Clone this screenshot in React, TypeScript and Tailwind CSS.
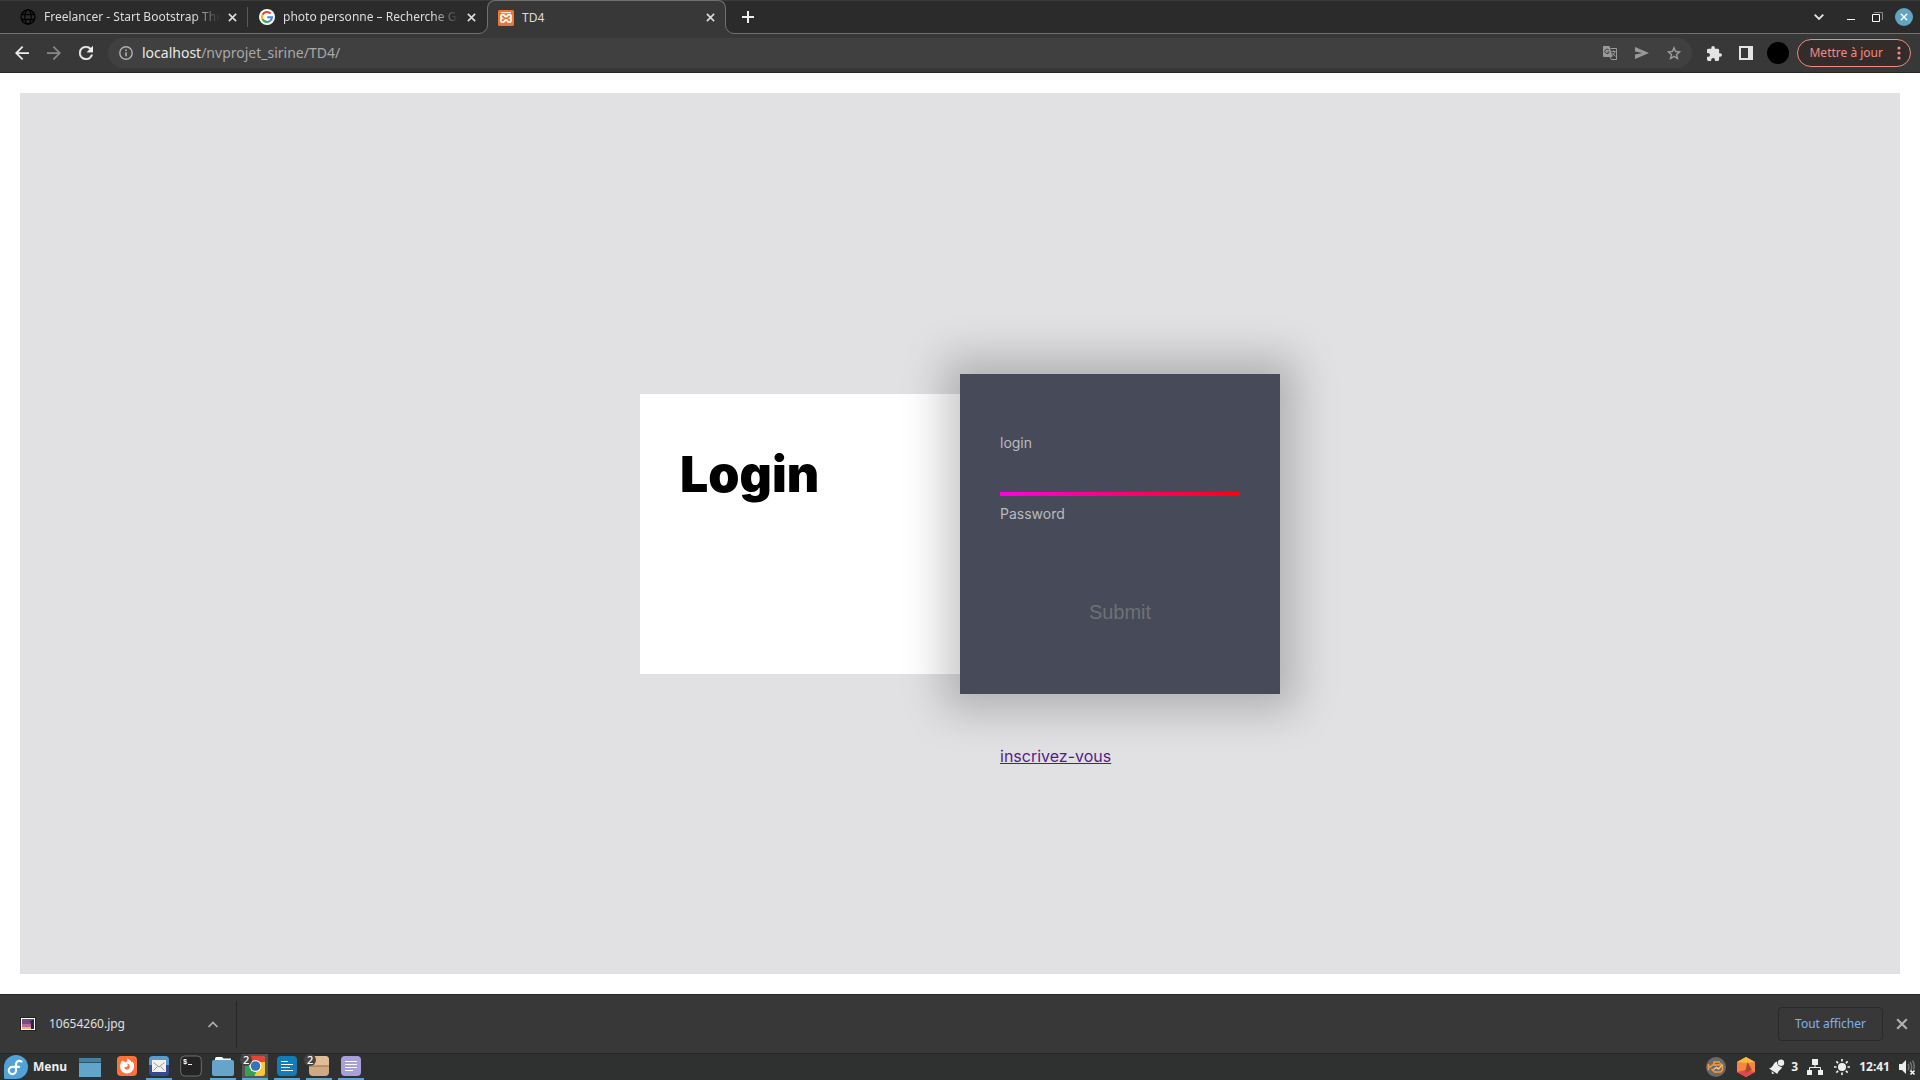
import React from "react";

const NOTO = "font-['Noto_Sans',sans-serif]";

function GlobeIcon() {
  return (
    <svg viewBox="0 0 16 16" className="size-4 shrink-0" fill="none" stroke="#000" strokeWidth="1.3">
      <circle cx="8" cy="8" r="7" />
      <ellipse cx="8" cy="8" rx="3.2" ry="7" />
      <path d="M1.5 5.5h13M1.5 10.5h13" />
    </svg>
  );
}

function GoogleIcon() {
  return (
    <svg viewBox="0 0 16 16" className="size-4 shrink-0">
      <circle cx="8" cy="8" r="8" fill="#fff" />
      <g fill="none" strokeWidth="2.1">
        <path d="M11.6 4.5A5 5 0 0 0 3.6 5.7" stroke="#ea4335" />
        <path d="M3.6 5.6a5 5 0 0 0 0 4.8" stroke="#fbbc05" />
        <path d="M3.6 10.3a5 5 0 0 0 7.6 1.5" stroke="#34a853" />
        <path d="M11.2 11.8A5 5 0 0 0 13 8.2H8.2" stroke="#4285f4" />
      </g>
    </svg>
  );
}

function XamppIcon() {
  return (
    <svg viewBox="0 0 16 16" className="size-4 shrink-0">
      <rect width="16" height="16" rx="1.5" fill="#f37430" />
      <path d="M3 2.700h10" stroke="#fff" strokeWidth="1" />
      <path
        d="M5 4.600c-2.800 0-2.600 2.800-1 3.600-1.800.8-1.800 4 .8 4 2.200 0 1.400-2.200 3.200-2.200s1 2.200 3.200 2.200c2.600 0 2.600-3.200.8-4 1.600-.8 1.800-3.600-1-3.600-2 0-1.400 2-3 2s-1-2-3-2z"
        fill="none"
        stroke="#fff"
        strokeWidth="1.800"
      />
    </svg>
  );
}

function Cross({ className = "" }: { className?: string }) {
  return (
    <svg viewBox="0 0 10 10" className={className} fill="none" stroke="currentColor" strokeWidth="1.8">
      <path d="M1 1l8 8M9 1l-8 8" />
    </svg>
  );
}

function TabStrip() {
  return (
    <div className="flex h-[34px] border-t border-[#3a3a3a] bg-[#2b2b2b] text-[12px] text-[#dcdcdc]">
      <div className="flex w-[247px] items-center border-b border-[#707070] pr-[7px] pl-5">
        <GlobeIcon />
        <span className="ml-2 min-w-0 flex-1 overflow-hidden whitespace-nowrap [mask-image:linear-gradient(to_right,#000_85%,transparent)]">
          Freelancer - Start Bootstrap Theme
        </span>
        <button aria-label="Fermer l'onglet" className="ml-1 flex size-4 items-center justify-center">
          <Cross className="size-[9px]" />
        </button>
      </div>
      <div className="flex w-[240px] items-center border-b border-[#707070] pr-2">
        <span className="h-5 w-px bg-[#5a5a5a]" />
        <span className="ml-[11px]"><GoogleIcon /></span>
        <span className="ml-2 min-w-0 flex-1 overflow-hidden whitespace-nowrap [mask-image:linear-gradient(to_right,#000_85%,transparent)]">
          photo personne – Recherche Google
        </span>
        <button aria-label="Fermer l'onglet" className="ml-1 flex size-4 items-center justify-center">
          <Cross className="size-[9px]" />
        </button>
      </div>
      <div className="relative -mt-px flex w-[239px] items-center rounded-t-lg border border-b-0 border-[#707070] bg-[#383838] pr-[7px] pl-[10px]">
        <svg viewBox="0 0 9 9" className="absolute bottom-0 left-[-9px] size-[9px]">
          <path d="M0 9V8.500A8.500 8.500 0 0 0 8.500 0H9v9z" fill="#383838" />
          <path d="M0 8.500A8.500 8.500 0 0 0 8.500 0" fill="none" stroke="#707070" />
        </svg>
        <svg viewBox="0 0 9 9" className="absolute right-[-9px] bottom-0 size-[9px]">
          <path d="M9 9V8.500A8.500 8.500 0 0 1 .5 0H0v9z" fill="#383838" />
          <path d="M9 8.500A8.500 8.500 0 0 1 .5 0" fill="none" stroke="#707070" />
        </svg>
        <XamppIcon />
        <span className="ml-2 flex-1">TD4</span>
        <button aria-label="Fermer l'onglet" className="flex size-4 items-center justify-center">
          <Cross className="size-[9px]" />
        </button>
      </div>
      <div className="flex flex-1 items-center border-b border-[#707070] pr-[7px] pl-[14px]">
        <button aria-label="Nouvel onglet" className="flex size-4 items-center justify-center">
          <svg viewBox="0 0 12 12" className="size-3" stroke="#eee" strokeWidth="2">
            <path d="M6 0v12M0 6h12" />
          </svg>
        </button>
        <span className="flex-1" />
        <button aria-label="Rechercher des onglets" className="mr-[23px]">
          <svg viewBox="0 0 10 6" className="h-[6px] w-[10px]" fill="none" stroke="#e4e4e4" strokeWidth="1.8">
            <path d="M.7.7L5 5 9.300.7" />
          </svg>
        </button>
        <button aria-label="Réduire" className="mr-[17px] pt-[5px]">
          <svg viewBox="0 0 8 1" className="h-px w-2"><path d="M0 .5h8" stroke="#fff" /></svg>
        </button>
        <button aria-label="Restaurer" className="mr-3">
          <svg viewBox="0 0 11 10" className="h-[10px] w-[11px]" fill="none">
            <path d="M2 .5h8.500V8" stroke="#888" />
            <path d="M.5 2.500h7v7h-7z" stroke="#fff" />
          </svg>
        </button>
        <button aria-label="Fermer" className="flex size-[18px] items-center justify-center rounded-full bg-[#60a5c3] text-white">
          <Cross className="size-2" />
        </button>
      </div>
    </div>
  );
}

function Toolbar() {
  return (
    <div className="flex h-[39px] items-center border-b border-[#262626] bg-[#383838] pr-[9px] pl-[15px]">
      <div className="flex items-center gap-[18px]">
        <button aria-label="Retour">
          <svg viewBox="4 4 16 16" className="size-[14px]" fill="#eee"><path d="M20 11H7.830l5.590-5.590L12 4l-8 8 8 8 1.410-1.410L7.830 13H20v-2z" /></svg>
        </button>
        <button aria-label="Avancer">
          <svg viewBox="4 4 16 16" className="size-[14px]" fill="#888"><path d="M12 4l-1.410 1.410L16.170 11H4v2h12.170l-5.580 5.590L12 20l8-8z" /></svg>
        </button>
        <button aria-label="Actualiser">
          <svg viewBox="4 4 16 16" className="size-[14px]" fill="#eee" stroke="#eee" strokeWidth=".4"><path d="M17.650 6.350A7.960 7.960 0 0 0 12 4a8 8 0 1 0 7.730 10h-2.080A6 6 0 1 1 12 6c1.660 0 3.140.69 4.220 1.780L13 11h7V4l-2.350 2.350z" /></svg>
        </button>
      </div>
      <div className="ml-[15px] flex h-[30px] flex-1 items-center rounded-full bg-[#404040] px-[11px]">
        <svg viewBox="0 0 14 14" className="size-[14px]" fill="none" stroke="#b0b0b0" strokeWidth="1.4">
          <circle cx="7" cy="7" r="6.200" />
          <path d="M7 6.200v4M7 3.600V5" strokeWidth="1.600" />
        </svg>
        <div className="ml-[9px] flex-1 text-[14px] leading-5 text-[#a9a9a9]">
          <span className="text-[#e8e8e8]">localhost</span>/nvprojet_sirine/TD4/
        </div>
        <div className="flex items-center gap-[18px]">
          <button aria-label="Traduire">
            <svg viewBox="0 0 14 14" className="size-[14px]" fill="none">
              <path d="M0 0h6.500l3 11H1a1 1 0 0 1-1-1z" fill="#9a9a9a" />
              <path d="M7.500 2.500H13.500v11H8.500l-1.500-2.500" stroke="#9a9a9a" />
              <path d="M5.800 4A2.200 2.200 0 1 0 6.200 6H4.300" stroke="#404040" />
              <path d="M8.500 5.500h4M10.500 4.500v1M12 5.500c-.5 2-1.500 3-3 4M9.500 7l3 3.500" stroke="#9a9a9a" />
            </svg>
          </button>
          <button aria-label="Partager">
            <svg viewBox="0 0 14 12" className="h-3 w-[14px]" fill="#9a9a9a"><path d="M0 0l14 6L0 12V7.500L7.500 6 0 4.500z" /></svg>
          </button>
          <button aria-label="Ajouter aux favoris">
            <svg viewBox="2 2 20 19" className="h-[14px] w-[14px]" fill="#a4a4a4" stroke="#a4a4a4" strokeWidth=".3"><path d="M22 9.240l-7.190-.62L12 2 9.190 8.630 2 9.240l5.460 4.730L5.820 21 12 17.270 18.180 21l-1.630-7.030L22 9.240zM12 15.400l-3.760 2.270 1-4.280-3.320-2.880 4.380-.38L12 6.100l1.710 4.040 4.380.38-3.320 2.880 1 4.280L12 15.400z" /></svg>
          </button>
        </div>
      </div>
      <button aria-label="Extensions" className="ml-[15px]">
        <svg viewBox="2 1 21 21" className="size-[15px]" fill="#e4e4e4"><path d="M20.500 11H19V7a2 2 0 0 0-2-2h-4V3.500a2.500 2.500 0 0 0-5 0V5H4a2 2 0 0 0-2 2v3.800h1.500a2.700 2.700 0 0 1 0 5.400H2V20a2 2 0 0 0 2 2h3.800v-1.500a2.700 2.700 0 0 1 5.400 0V22H17a2 2 0 0 0 2-2v-4h1.500a2.500 2.500 0 0 0 0-5z" /></svg>
      </button>
      <button aria-label="Panneau latéral" className="ml-[17px]">
        <svg viewBox="0 0 14 14" className="size-[14px]"><path d="M0 0h14v14H0zM2 2v10h7V2z" fill="#e4e4e4" fillRule="evenodd" /></svg>
      </button>
      <button aria-label="Profil" className="ml-[14px] size-[22px] rounded-full bg-black" />
      <button className="ml-2 flex h-7 items-center rounded-full border border-[#f28b82] bg-[#342b2b] pr-[9px] pl-[11px] text-[12px] text-[#f28b82]">
        Mettre à jour
        <svg viewBox="0 0 4 14" className="ml-[14px] h-[14px] w-1" fill="#f28b82">
          <circle cx="2" cy="2" r="1.600" /><circle cx="2" cy="7" r="1.600" /><circle cx="2" cy="12" r="1.600" />
        </svg>
      </button>
    </div>
  );
}

function LoginPage() {
  return (
    <main className="flex flex-1 bg-white p-5 font-['Inter',sans-serif]">
      <div className="grid flex-1 grid-rows-[1fr_auto_1fr] justify-center bg-[#e1e1e3]">
        <div className="row-start-2 flex items-center">
          <div className="h-[280px] w-80 bg-white p-10">
            <h1 className="mt-2.5 text-[50px] leading-[60px] font-black text-black">Login</h1>
          </div>
          <form className="flex h-80 w-80 flex-col bg-[#474a59] px-10 pt-[60px] text-[14px] leading-[18px] text-[#bbb] shadow-[0_0_40px_16px_rgba(0,0,0,0.22)]" onSubmit={(e) => e.preventDefault()}>
            <label htmlFor="login">login</label>
            <input id="login" type="text" className="h-10 w-full bg-transparent text-[20px] text-[#f2f2f2] outline-none" />
            <div className="h-1 w-full bg-[linear-gradient(to_right,#ff00e0,#ff0010)]" />
            <label htmlFor="password" className="mt-[9px]">Password</label>
            <input id="password" type="password" className="h-10 w-full bg-transparent text-[20px] text-[#f2f2f2] outline-none" />
            <button type="submit" className="mt-[34px] h-[30px] w-full font-['Liberation_Sans',sans-serif] text-[20px] text-[#707075]">
              Submit
            </button>
          </form>
        </div>
        <div className="row-start-3 pt-[50px] pl-[360px]">
          <a href="#inscription" className="text-[16px] leading-6 text-[#551a8b] underline">inscrivez-vous</a>
        </div>
      </div>
    </main>
  );
}

function DownloadBar() {
  return (
    <div className="flex h-[60px] items-center border-t border-b border-[#262626] bg-[#383838] pr-3 pl-5 text-[12px] text-[#e0e0e0]">
      <svg viewBox="0 0 16 14" className="h-[14px] w-4">
        <rect x=".5" y=".5" width="15" height="13" fill="#fff" stroke="#222" />
        <path d="M2 2h12v10H2z" fill="#7a4a86" />
        <path d="M2 7h12v3H2z" fill="#b86a96" />
        <path d="M2 10h12v2H2z" fill="#eeb07c" />
        <path d="M9 3l2 1 3-2v10h-3V6z" fill="#32214a" />
      </svg>
      <span className="ml-[13px] w-[158px]">10654260.jpg</span>
      <button aria-label="Options du téléchargement">
        <svg viewBox="0 0 12 7" className="h-[7px] w-3" fill="none" stroke="#b0b0b0" strokeWidth="1.700"><path d="M1.500 6L6 1.500 10.500 6" /></svg>
      </button>
      <span className="ml-[17px] h-[47px] w-px bg-[#262626]" />
      <span className="flex-1" />
      <button className="h-[34px] rounded border border-[#292929] px-4 text-[12px] text-[#7cb2f4]">Tout afficher</button>
      <button aria-label="Fermer la barre" className="ml-[13px] text-[#b0b0b0]"><Cross className="size-3" /></button>
    </div>
  );
}

function TaskItem({ label, open, active, badge, children }: { label: string; open?: boolean; active?: boolean; badge?: string; children: React.ReactNode }) {
  return (
    <button
      aria-label={label}
      className={"relative flex h-[26px] w-[26px] justify-center border-b-2 pt-px " + (open ? "border-[#62a5cb] " : "border-transparent ") + (active ? "bg-[#555]" : "")}
    >
      <svg viewBox="0 0 22 22" className="size-[22px] shrink-0">{children}</svg>
      {badge && <span className="absolute top-0 -left-0.5 flex size-3 items-center justify-center rounded-full bg-[#444] text-[11px] leading-3 font-medium text-white">{badge}</span>}
    </button>
  );
}

function Taskbar() {
  return (
    <footer className="flex h-[26px] items-center bg-[#2f3130] text-[12px] font-bold text-[#eee]">
      <button className="ml-1 flex items-center gap-[5px]">
        <svg viewBox="0 0 24 24" className="size-6">
          <path d="M12 0a12 12 0 1 1 0 24H1.500A1.500 1.500 0 0 1 0 22.500V12A12 12 0 0 1 12 0z" fill="#51a2da" />
          <path d="M17.500 6.500c-3-1.500-5.500 0-5.500 3V15.500a3.600 3.600 0 1 1-3.600-3.600H15" fill="none" stroke="#fff" strokeWidth="2.200" strokeLinecap="round" />
        </svg>
        Menu
      </button>
      <button aria-label="Afficher le bureau" className="ml-3">
        <svg viewBox="0 0 22 19" className="h-[19px] w-[22px]"><path d="M0 0h22v19H0z" fill="#62a5cb" /><path d="M0 0h22v4H0z" fill="#487f9e" /><path d="M0 4.500h22" stroke="#24586f" /></svg>
      </button>
      <div className="ml-[13px] flex gap-[6px]">
        <TaskItem label="Firefox">
          <rect x="1" y="1" width="20" height="20" rx="4" fill="#ff7139" />
          <path d="M10 7.500c1-.7 1.300-2 1-4 3.500 1 4.300 3 4.500 4l1-1c1.500 2 1.500 3.500 1.500 5a7 7 0 1 1-14 0C4 9 5 7 6 5.500z" fill="#fff" />
          <path d="M11 8.500a3 3 0 1 1-3 4l2.500-.5L12 10.500z" fill="#ff7139" />
        </TaskItem>
        <TaskItem label="Courrier" open>
          <rect x="1" y="1" width="20" height="20" rx="4" fill="#354b91" />
          <path d="M1 10h20V5a4 4 0 0 0-4-4H5a4 4 0 0 0-4 4z" fill="#5a9bd0" />
          <path d="M4 5h14v12H4z" fill="#f4f1ec" />
          <path d="M5.500 7.500L11 12l5.500-4.500M5.500 15.500l4-4M16.500 15.500l-4-4" fill="none" stroke="#999" />
        </TaskItem>
        <TaskItem label="Terminal">
          <rect x=".7" y="1" width="20.600" height="20" rx="4" fill="#242424" stroke="#747474" strokeWidth=".9" />
          <text x="3" y="9" fill="#fff" fontSize="7" fontFamily="Liberation Mono, monospace">$</text>
          <path d="M8 9.500h4" stroke="#fff" />
        </TaskItem>
        <TaskItem label="Fichiers" open>
          <path d="M3 3.500L4 2h6l1.500 1.500H19V8H3z" fill="#fff" />
          <rect y="5" width="22" height="16" rx="2" fill="#66a5c9" />
        </TaskItem>
        <TaskItem label="Chrome" open active badge="2">
          <clipPath id="chrome"><rect x="1" y="1" width="20" height="20" rx="3" /></clipPath>
          <g clipPath="url(#chrome)">
            <path d="M0 0h22v22H0z" fill="#fcc934" />
            <path d="M0 0h22v7H0z" fill="#e64335" />
            <path d="M0 4l8 10 5 1-3 7H0z" fill="#34a34f" />
          </g>
          <circle cx="11.500" cy="11" r="6" fill="#fff" /><circle cx="11.500" cy="11" r="4.800" fill="#3674b8" />
        </TaskItem>
        <TaskItem label="Writer" open>
          <rect x="1" y="1" width="20" height="20" rx="4" fill="#137cb6" />
          <path d="M5 6.500h7M5 9.500h12M5 12.500h9M5 15.500h12" stroke="#fff" />
        </TaskItem>
        <TaskItem label="Archives" open badge="2">
          <rect x="1" y="1" width="20" height="20" rx="4" fill="#d1aa83" />
          <path d="M1 11V5a4 4 0 0 1 4-4h12a4 4 0 0 1 4 4v6z" fill="#dfbd98" />
          <path d="M1 11h20" stroke="#8f704f" />
        </TaskItem>
        <TaskItem label="Éditeur de texte" open>
          <rect x="1" y="1" width="20" height="20" rx="4" fill="#a89fdb" />
          <path d="M5 6.500h12M5 9.500h12M5 12.500h12M5 15.500h8" stroke="#fff" />
        </TaskItem>
      </div>
      <span className="flex-1" />
      <svg viewBox="0 0 20 20" className="size-5">
        <circle cx="10" cy="10" r="10" fill="#6a6a6a" />
        <path d="M2.500 7v6M2.500 10h2l2-2h6l3-1.500M16.500 8.500v4.500l-2 2H8.500l-3-3M8 7.500V5h6" fill="none" stroke="#fb9a36" strokeWidth="1.600" />
        <path d="M7.500 12.500l3-2 2 1.500 4-4.500" fill="none" stroke="#ffc67d" strokeWidth="1.500" />
      </svg>
      <svg viewBox="0 0 18 20" className="ml-[11px] h-5 w-[18px]">
        <path d="M9 0l9 5v10l-9 5-9-5V5z" fill="#f58445" />
        <path d="M9 0l9 5-9 1-9-1z" fill="#fdb93c" />
        <path d="M0 15l9-2 9 2-9 5z" fill="#e2484f" />
        <path d="M10.500 5L15 13l-7 3z" fill="#a84a2a" />
      </svg>
      <svg viewBox="0 0 16 16" className="ml-[14px] size-4" fill="#eee">
        <path d="M0 9.500C5 8.500 4 3 8 2.500c0 3.500 2 5.500 5 5.500-.5 3-4 3-4.500 7z" /><circle cx="12" cy="3.700" r="3.200" />
        <path d="M2.500 12l3 2.500-2.500.5z" />
      </svg>
      <span className="ml-[6px]">3</span>
      <svg viewBox="0 0 16 16" className="ml-[9px] size-4" fill="#eee">
        <path d="M5 0h6v6H5zM0 11h5v5H0zM11 11h5v5h-5z" /><path d="M8 5v3.500M2.500 11V8.500h11V11" fill="none" stroke="#eee" />
      </svg>
      <svg viewBox="0 0 16 16" className="ml-[11px] size-4">
        <circle cx="8" cy="8" r="4" fill="#eee" />
        <path d="M8 0v2.500M8 13.500V16M0 8h2.500M13.500 8H16M2.300 2.300l1.800 1.800M11.900 11.900l1.800 1.800M2.300 13.700l1.800-1.800M11.900 4.100l1.800-1.800" stroke="#eee" strokeWidth="1.700" />
      </svg>
      <span className="ml-[9px]">12:41</span>
      <svg viewBox="0 0 17 16" className="mr-1 ml-[9px] h-4 w-[17px]">
        <path d="M0 5h3l4-4v14l-4-4H0z" fill="#eee" />
        <path d="M9 5q2 3 0 6M11 3q3.500 5 0 10M13.500 1.500q3 5 1 9" fill="none" stroke="#777" strokeWidth="1.400" />
        <path d="M11.500 11.500l4 4M15.500 11.500l-4 4" stroke="#fff" strokeWidth="1.500" />
      </svg>
    </footer>
  );
}

export default function App() {
  return (
    <div className={"flex min-h-screen flex-col " + NOTO}>
      <header>
        <TabStrip />
        <Toolbar />
      </header>
      <LoginPage />
      <DownloadBar />
      <Taskbar />
    </div>
  );
}
